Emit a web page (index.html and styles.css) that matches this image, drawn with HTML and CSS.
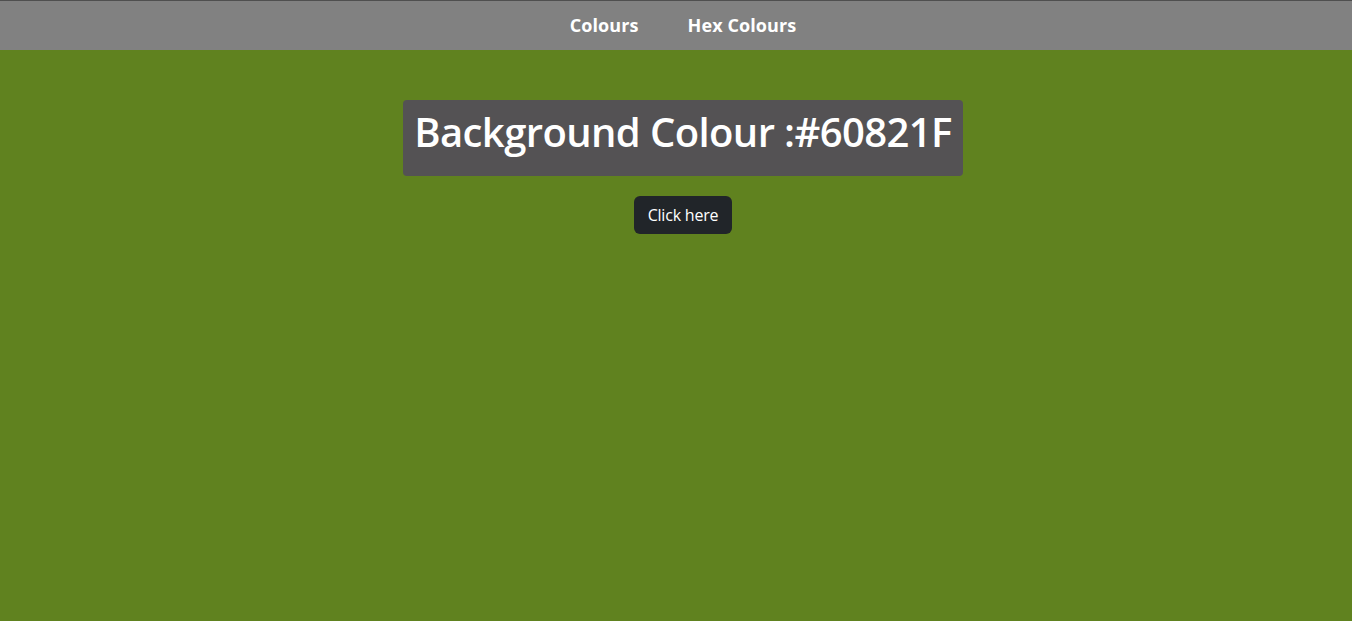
FILE: index.html
```html
<!DOCTYPE html>
<html>
<head>
<meta charset="utf-8">
<link rel="stylesheet" href="styles.css">
</head>
<body>
<nav class="topnav">
  <a class="navlink" href="#">Colours</a>
  <a class="navlink" href="#">Hex Colours</a>
</nav>
<main class="content">
  <h1 class="colour-title">Background Colour :#60821F</h1>
  <button class="btn-dark">Click here</button>
</main>
</body>
</html>
```

FILE: styles.css
```css
html, body {
  margin: 0;
  padding: 0;
  height: 100%;
}
body {
  background: #60821F;
  font-family: "Open Sans", "Noto Sans", sans-serif;
  color: #fff;
}
.topnav {
  border-top: 1px solid #4f4f4f;
  background: #818181;
  display: flex;
  justify-content: center;
  align-items: center;
  gap: 49px;
  padding-left: 14px;
  padding-bottom: 2px;
  box-sizing: border-box;
  height: 50px;
}
.navlink {
  color: #fff;
  text-decoration: none;
  font-weight: 700;
  font-size: 18px;
  letter-spacing: 0.1px;
}
.content {
  display: flex;
  flex-direction: column;
  align-items: center;
  padding-top: 50px;
  padding-left: 14px;
}
.colour-title {
  margin: 0;
  background: #545254;
  border-radius: 4px;
  font-size: 40px;
  font-weight: 560;
  letter-spacing: -0.6px;
  line-height: 1.2;
  padding: 8px 11px 20px 11px;
}
.btn-dark {
  margin-top: 20px;
  background: #212529;
  color: #fff;
  border: none;
  border-radius: 6px;
  font-family: inherit;
  font-size: 16px;
  letter-spacing: -0.2px;
  line-height: 1.5;
  padding: 7px 14px;
  cursor: pointer;
}
```
